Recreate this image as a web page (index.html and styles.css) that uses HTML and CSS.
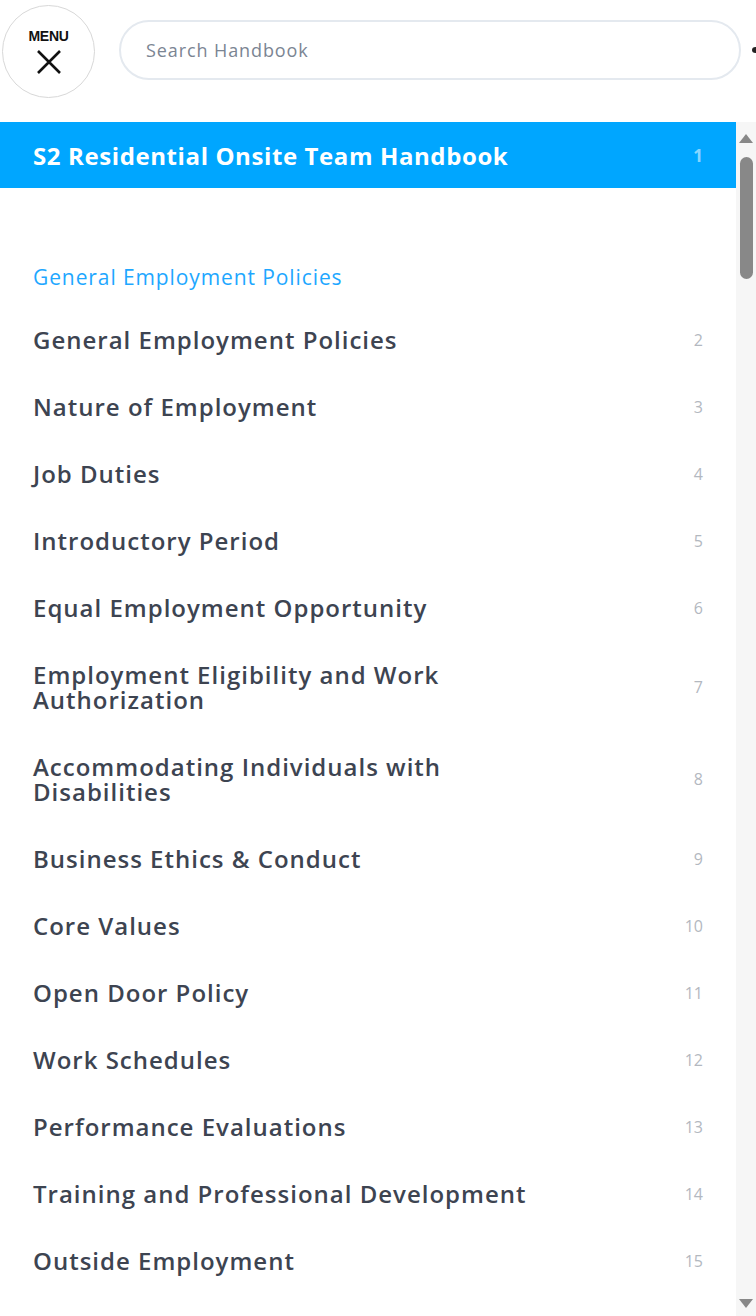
FILE: index.html
```html
<!DOCTYPE html>
<html>
<head>
<meta charset="utf-8">
<link rel="stylesheet" href="styles.css">
</head>
<body>
<header class="top">
  <div class="menu-btn">
    <span class="menu-label">MENU</span>
    <svg class="menu-x" width="26" height="26" viewBox="0 0 26 26"><path d="M2 2 L24 24 M24 2 L2 24" stroke="#111" stroke-width="2.6" fill="none"/></svg>
  </div>
  <div class="search"><span class="placeholder">Search Handbook</span></div>
  <span class="edge-dot"></span>
</header>
<div class="main">
  <div class="toc">
    <div class="title-row"><span class="title">S2 Residential Onsite Team Handbook</span><span class="title-num">1</span></div>
    <div class="section">General Employment Policies</div>
    <ul class="items">
      <li class="item"><span class="name">General Employment Policies</span><span class="num">2</span></li>
      <li class="item"><span class="name">Nature of Employment</span><span class="num">3</span></li>
      <li class="item"><span class="name">Job Duties</span><span class="num">4</span></li>
      <li class="item"><span class="name">Introductory Period</span><span class="num">5</span></li>
      <li class="item"><span class="name">Equal Employment Opportunity</span><span class="num">6</span></li>
      <li class="item"><span class="name">Employment Eligibility and Work Authorization</span><span class="num">7</span></li>
      <li class="item"><span class="name">Accommodating Individuals with Disabilities</span><span class="num">8</span></li>
      <li class="item"><span class="name">Business Ethics &amp; Conduct</span><span class="num">9</span></li>
      <li class="item"><span class="name">Core Values</span><span class="num">10</span></li>
      <li class="item"><span class="name">Open Door Policy</span><span class="num">11</span></li>
      <li class="item"><span class="name">Work Schedules</span><span class="num">12</span></li>
      <li class="item"><span class="name">Performance Evaluations</span><span class="num">13</span></li>
      <li class="item"><span class="name">Training and Professional Development</span><span class="num">14</span></li>
      <li class="item"><span class="name">Outside Employment</span><span class="num">15</span></li>
    </ul>
  </div>
  <div class="scrollbar">
    <span class="arrow-up"></span>
    <span class="thumb"></span>
    <span class="spacer"></span>
    <span class="arrow-down"></span>
  </div>
</div>
</body>
</html>
```
FILE: styles.css
```css
html, body {
  margin: 0;
  padding: 0;
  background: #fff;
  height: 1316px;
  overflow: hidden;
  font-family: "Open Sans", Lato, sans-serif;
}
.top {
  display: flex;
  align-items: flex-start;
  height: 122px;
  position: relative;
}
.menu-btn {
  margin: 5px 0 0 2px;
  width: 91px;
  height: 91px;
  border: 1px solid #d8d8d8;
  border-radius: 50%;
  display: flex;
  flex-direction: column;
  align-items: center;
  box-sizing: content-box;
}
.menu-label {
  margin-top: 22px;
  font-family: "Liberation Sans", Arial, sans-serif;
  font-weight: 700;
  font-size: 14px;
  color: #111;
  letter-spacing: -0.3px;
}
.menu-x {
  margin-top: 5px;
}
.search {
  margin: 20px 0 0 24px;
  width: 618px;
  height: 56px;
  border: 2px solid #e4e9ef;
  border-radius: 30px;
  display: flex;
  align-items: center;
}
.placeholder {
  margin-left: 25px;
  font-size: 18px;
  letter-spacing: 0.9px;
  color: #7b8593;
}
.edge-dot {
  position: absolute;
  left: 752px;
  top: 47px;
  width: 7px;
  height: 6px;
  border-radius: 50%;
  background: #222;
}
.main {
  display: flex;
  height: 1194px;
}
.toc {
  width: 736px;
}
.title-row {
  height: 66px;
  background: #00a6ff;
  display: flex;
  align-items: center;
  justify-content: space-between;
  padding: 0 33px 0 33px;
  box-sizing: border-box;
}
.title {
  color: #fff;
  font-weight: 700;
  font-size: 24px;
  letter-spacing: 0.6px;
}
.title-num {
  color: rgba(255,255,255,0.55);
  font-weight: 700;
  font-size: 17px;
}
.section {
  margin: 74px 0 0 33px;
  color: #1ea7ff;
  font-size: 21px;
  letter-spacing: 0.9px;
  line-height: 30px;
}
.items {
  list-style: none;
  margin: 14px 0 0 0;
  padding: 0;
}
.item {
  display: flex;
  align-items: center;
  justify-content: space-between;
  padding: 21px 33px 21px 33px;
}
.name {
  max-width: 500px;
  color: #3d4451;
  font-weight: 600;
  font-size: 24px;
  letter-spacing: 1px;
  line-height: 25px;
}
.num {
  color: #b3b8bf;
  font-size: 16px;
}
.scrollbar {
  width: 20px;
  background: #f6f6f6;
  display: flex;
  flex-direction: column;
  align-items: center;
}
.arrow-up {
  margin-top: 12px;
  width: 0;
  height: 0;
  border-left: 7px solid transparent;
  border-right: 7px solid transparent;
  border-bottom: 9px solid #888;
}
.thumb {
  margin-top: 14px;
  width: 13px;
  height: 122px;
  border-radius: 7px;
  background: #888;
}
.spacer {
  flex: 1;
}
.arrow-down {
  margin-bottom: 8px;
  width: 0;
  height: 0;
  border-left: 7px solid transparent;
  border-right: 7px solid transparent;
  border-top: 9px solid #888;
}
```
